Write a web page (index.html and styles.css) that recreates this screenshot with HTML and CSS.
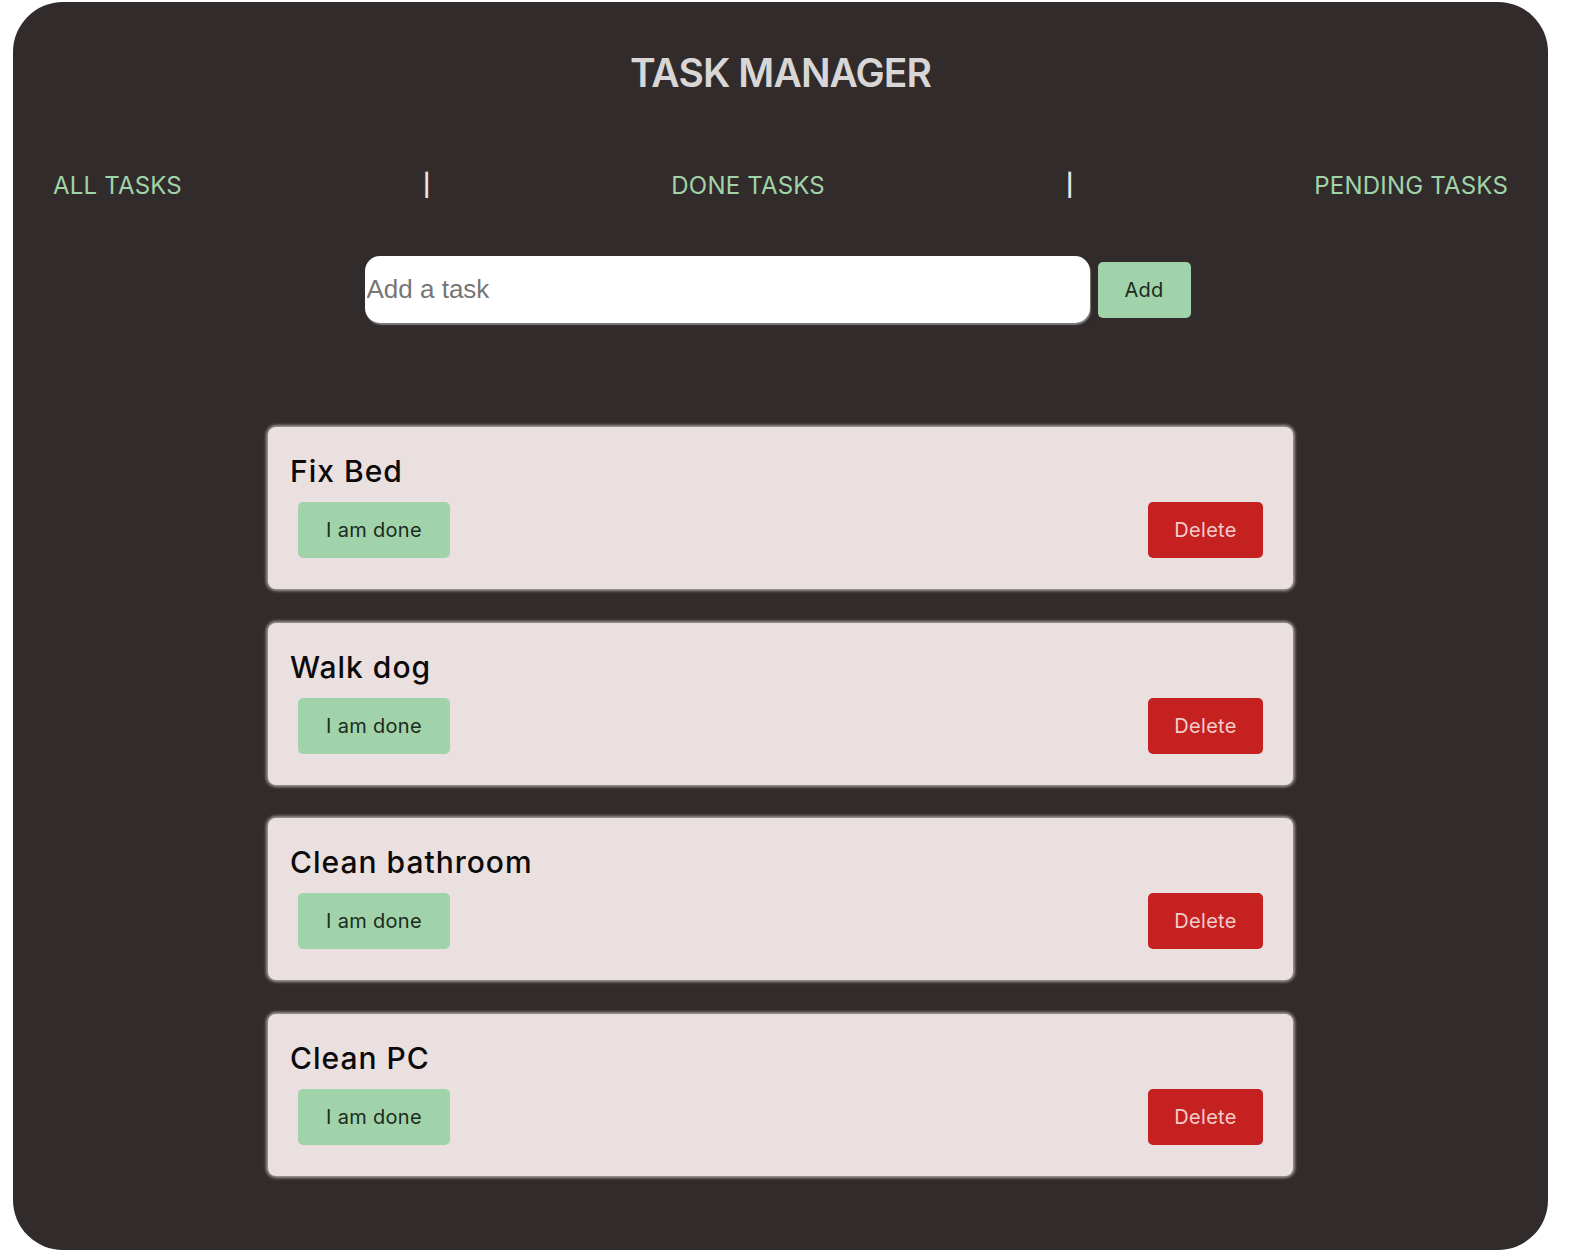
FILE: index.html
```html
<!DOCTYPE html>
<html lang="en">
<head>
<meta charset="utf-8">
<title>Task Manager</title>
<link rel="stylesheet" href="styles.css">
</head>
<body>
<div class="app">
  <h1 class="title">TASK MANAGER</h1>
  <nav class="nav">
    <a class="nav-link">ALL TASKS</a>
    <span class="sep">|</span>
    <a class="nav-link">DONE TASKS</a>
    <span class="sep">|</span>
    <a class="nav-link">PENDING TASKS</a>
  </nav>
  <form class="add-form">
    <input class="task-input" type="text" placeholder="Add a task">
    <button class="btn btn-add" type="button">Add</button>
  </form>
  <div class="list">
    <div class="card">
      <h2 class="card-title">Fix Bed</h2>
      <div class="card-actions">
        <button class="btn btn-done" type="button">I am done</button>
        <button class="btn btn-delete" type="button">Delete</button>
      </div>
    </div>
    <div class="card">
      <h2 class="card-title">Walk dog</h2>
      <div class="card-actions">
        <button class="btn btn-done" type="button">I am done</button>
        <button class="btn btn-delete" type="button">Delete</button>
      </div>
    </div>
    <div class="card">
      <h2 class="card-title">Clean bathroom</h2>
      <div class="card-actions">
        <button class="btn btn-done" type="button">I am done</button>
        <button class="btn btn-delete" type="button">Delete</button>
      </div>
    </div>
    <div class="card">
      <h2 class="card-title">Clean PC</h2>
      <div class="card-actions">
        <button class="btn btn-done" type="button">I am done</button>
        <button class="btn btn-delete" type="button">Delete</button>
      </div>
    </div>
  </div>
</div>
</body>
</html>
```

FILE: styles.css
```css
* { box-sizing: border-box; }

body {
  margin: 0;
  background: #ffffff;
  font-family: "Inter", "Noto Sans", sans-serif;
}

.app {
  margin: 2px 24px 0 13px;
  height: 1248px;
  background: #322b2b;
  border-radius: 50px;
  display: flex;
  flex-direction: column;
  overflow: hidden;
}

.title {
  margin: 47px 0 0;
  text-align: center;
  font-size: 39px;
  line-height: 48px;
  font-weight: 600;
  color: #d9d6d6;
  letter-spacing: -0.9px;
}

.nav {
  margin-top: 71px;
  padding: 0 40px;
  display: flex;
  justify-content: space-between;
  align-items: center;
  height: 34px;
}

.nav-link {
  font-size: 24px;
  color: #a0d4a9;
  cursor: pointer;
  letter-spacing: 0.2px;
}

.sep {
  font-size: 22px;
  font-weight: 600;
  color: #e8e8e8;
}

.add-form {
  margin-top: 54px;
  display: flex;
  justify-content: center;
  align-items: center;
  gap: 8px;
  padding-right: 6px;
}

.task-input {
  width: 725px;
  height: 67px;
  border: none;
  border-radius: 15px;
  background: #ffffff;
  box-shadow: 1px 2px 1px #7a7a7a;
  padding: 0 2px;
  font-family: "Liberation Sans", Arial, sans-serif;
  font-size: 26px;
  outline: none;
}

.task-input::placeholder { color: #767676; }

.btn {
  border: none;
  border-radius: 5px;
  height: 56px;
  font-family: "Inter", "Noto Sans", sans-serif;
  font-size: 20px;
  letter-spacing: 0.3px;
  cursor: pointer;
}

.btn-add {
  width: 93px;
  background: #a0d3aa;
  color: #1d2a20;
}

.list {
  margin-top: 104px;
  display: flex;
  flex-direction: column;
  align-items: center;
  gap: 33.5px;
}

.card {
  width: 1025px;
  height: 162px;
  background: #ebe0e0;
  border-radius: 8px;
  box-shadow: 0 0 3px 2px #a19a9a;
  padding: 26px 30px 0 22px;
}

.card-title {
  margin: 0;
  font-size: 30px;
  line-height: 36px;
  font-weight: 500;
  color: #0c0a0a;
  letter-spacing: 1px;
}

.card-actions {
  margin-top: 13px;
  padding-left: 8px;
  display: flex;
  justify-content: space-between;
}

.btn-done {
  width: 152px;
  background: #a0d3aa;
  color: #1d2a20;
}

.btn-delete {
  width: 115px;
  background: #c52121;
  color: #f2cccc;
}
```
